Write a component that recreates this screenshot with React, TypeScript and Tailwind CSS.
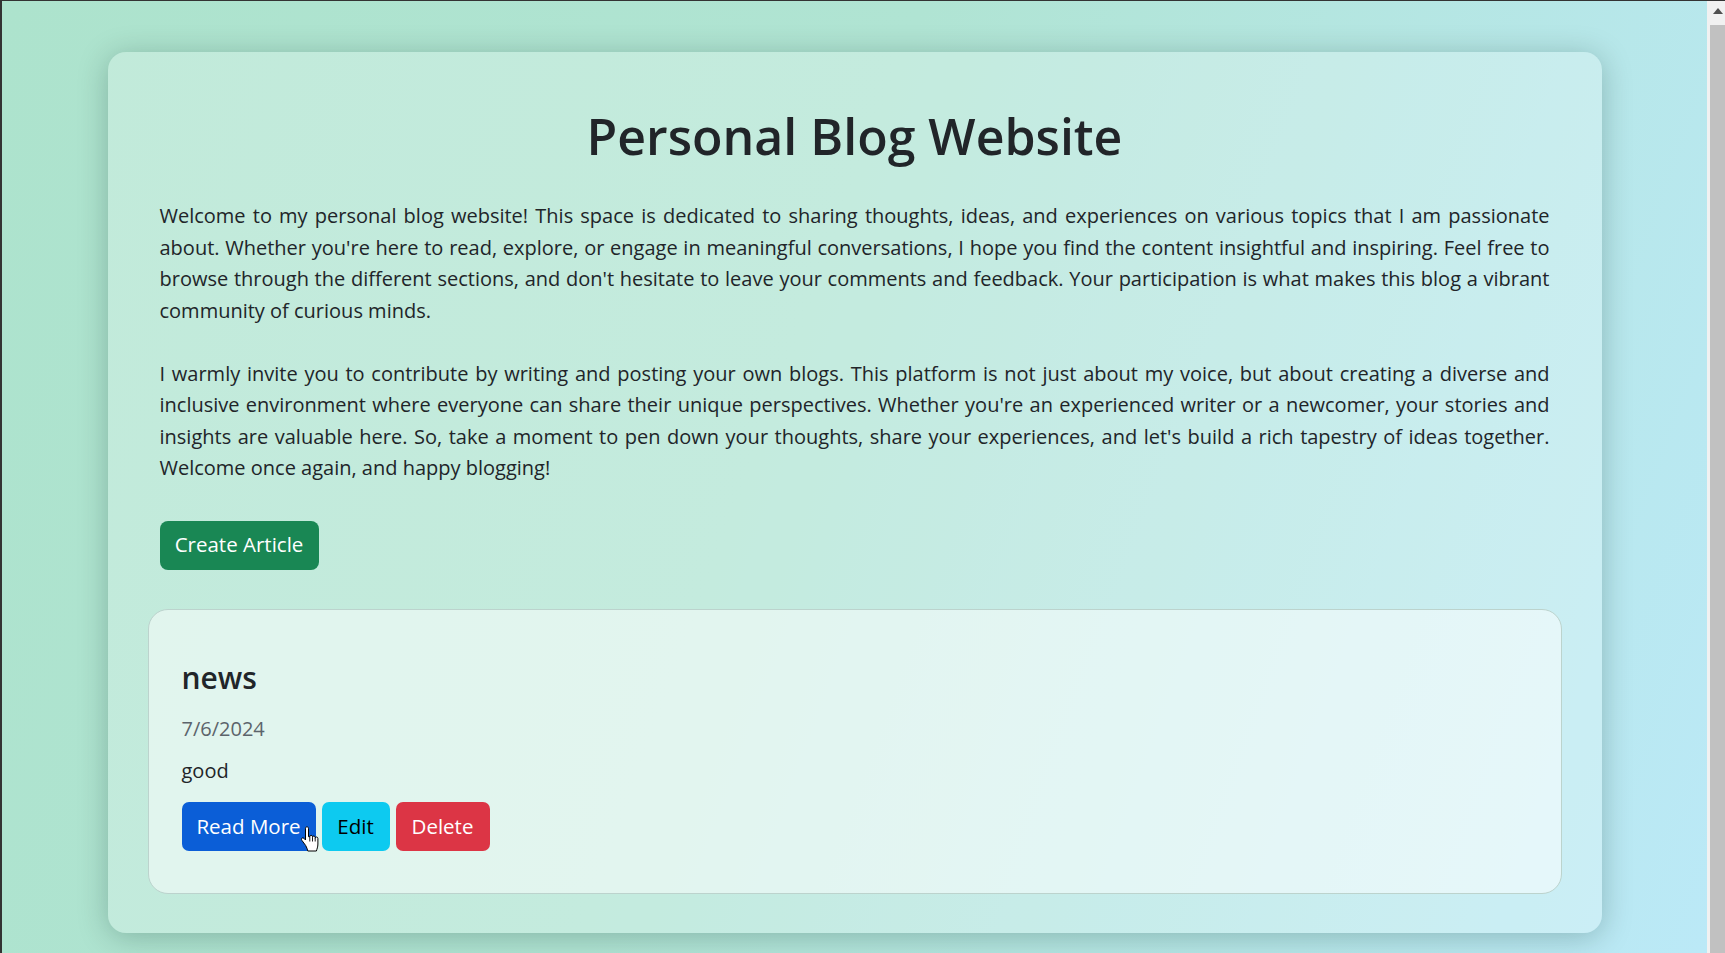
import React from "react";

interface Article {
  title: string;
  date: string;
  body: string;
}

const articles: Article[] = [{ title: "news", date: "7/6/2024", body: "good" }];

// Windows-style hand pointer, drawn where the mouse sat over "Read More"
const HandCursor = () => (
  <svg
    width="19"
    height="26"
    viewBox="0 0 19 26"
    className="absolute left-[119px] top-[24px] pointer-events-none"
  >
    <path
      d="M6 0.8 C5.1 0.8 4.5 1.5 4.5 2.3 V14 L3 12.4 C2.3 11.7 1.2 11.7 0.7 12.4 C0.3 13 0.4 13.8 0.9 14.4 L4.6 19.4 C5.6 21 6.4 23.3 6.8 25 H15.4 C15.9 23 16.9 21 16.9 18 V12.4 C16.9 11.6 16.3 11 15.5 11 C14.8 11 14.2 11.6 14.2 12.4 V11.4 C14.2 10.6 13.6 10 12.8 10 C12.1 10 11.5 10.6 11.5 11.4 V10.7 C11.5 9.9 10.9 9.3 10.1 9.3 C9.4 9.3 8.8 9.9 8.8 10.7 H7.5 V2.3 C7.5 1.5 6.9 0.8 6 0.8 Z"
      fill="#fff"
      stroke="#000"
      strokeWidth="1"
      strokeLinejoin="round"
    />
    <path d="M8.8 10.7 V15.5 M11.5 11.4 V15.5 M14.2 12.4 V15.5" stroke="#000" strokeWidth="0.9" />
  </svg>
);

const ArticleCard = ({ article }: { article: Article }) => (
  <div className="rounded-[20px] border border-[#bcd3cd] bg-white/50 px-[33px] pt-[49px] pb-[42px]">
    <h2 className="text-[30px] leading-[38px] font-semibold text-[#212529]">{article.title}</h2>
    <div className="mt-[17px] text-[20px] leading-[30px] text-[#5c646b]">{article.date}</div>
    <p className="mt-[12px] text-[20px] leading-[30px] text-[#212529]">{article.body}</p>
    <div className="relative mt-[16px] flex gap-[6px]">
      <button className="flex h-[49px] w-[134px] items-center justify-center rounded-[7px] bg-[#0b5ed7] text-[20.5px] text-white">
        Read More
      </button>
      <button className="flex h-[49px] w-[68px] items-center justify-center rounded-[7px] bg-[#0dcaf0] text-[20.5px] text-black">
        Edit
      </button>
      <button className="flex h-[49px] w-[94px] items-center justify-center rounded-[7px] bg-[#dc3545] text-[20.5px] text-white">
        Delete
      </button>
      <HandCursor />
    </div>
  </div>
);

export default function App() {
  return (
    <div className="flex h-[953px] w-full overflow-hidden border-l-2 border-t border-[#333] font-['Open_Sans',sans-serif]">
      <main className="flex-1 bg-[linear-gradient(110deg,#ade3cd_0%,#b0e4d3_45%,#bbe9f7_100%)] pt-[51px]">
        <div className="mx-auto w-[1494px] rounded-[18px] bg-white/25 px-[40px] pt-[51px] pb-[39px] shadow-[0_4px_30px_rgba(0,40,30,0.25)]">
          <h1 className="text-center text-[50px] leading-[67px] font-semibold text-[#212529]">
            Personal Blog Website
          </h1>

          <div className="mt-[30px] px-3 text-[20px] leading-[31.5px] text-[#212529]">
            <p className="text-justify">
              Welcome to my personal blog website! This space is dedicated to sharing thoughts, ideas, and
              experiences on various topics that I am passionate about. Whether you're here to read, explore, or
              engage in meaningful conversations, I hope you find the content insightful and inspiring. Feel free
              to browse through the different sections, and don't hesitate to leave your comments and feedback.
              Your participation is what makes this blog a vibrant community of curious minds.
            </p>
            <p className="mt-[31.5px] text-justify">
              I warmly invite you to contribute by writing and posting your own blogs. This platform is not just
              about my voice, but about creating a diverse and inclusive environment where everyone can share
              their unique perspectives. Whether you're an experienced writer or a newcomer, your stories and
              insights are valuable here. So, take a moment to pen down your thoughts, share your experiences, and
              let's build a rich tapestry of ideas together. Welcome once again, and happy blogging!
            </p>
            <button className="mt-[37px] flex h-[49px] w-[159px] items-center justify-center rounded-[8px] bg-[#198754] text-[20.5px] text-white">
              Create Article
            </button>
          </div>

          <div className="mt-[39px] flex flex-col gap-4">
            {articles.map((a) => (
              <ArticleCard key={a.title} article={a} />
            ))}
          </div>
        </div>
      </main>

      {/* fake browser scrollbar */}
      <div className="flex w-[18px] flex-col bg-[#f1f1f1]">
        <div className="flex h-[20px] items-center justify-center pl-[3px]">
          <svg width="10" height="6" viewBox="0 0 10 6">
            <path d="M0 6 L5 0 L10 6 Z" fill="#505050" />
          </svg>
        </div>
        <div className="mt-[4px] ml-[3px] flex-1 bg-[#c1c1c1]" />
      </div>
    </div>
  );
}
